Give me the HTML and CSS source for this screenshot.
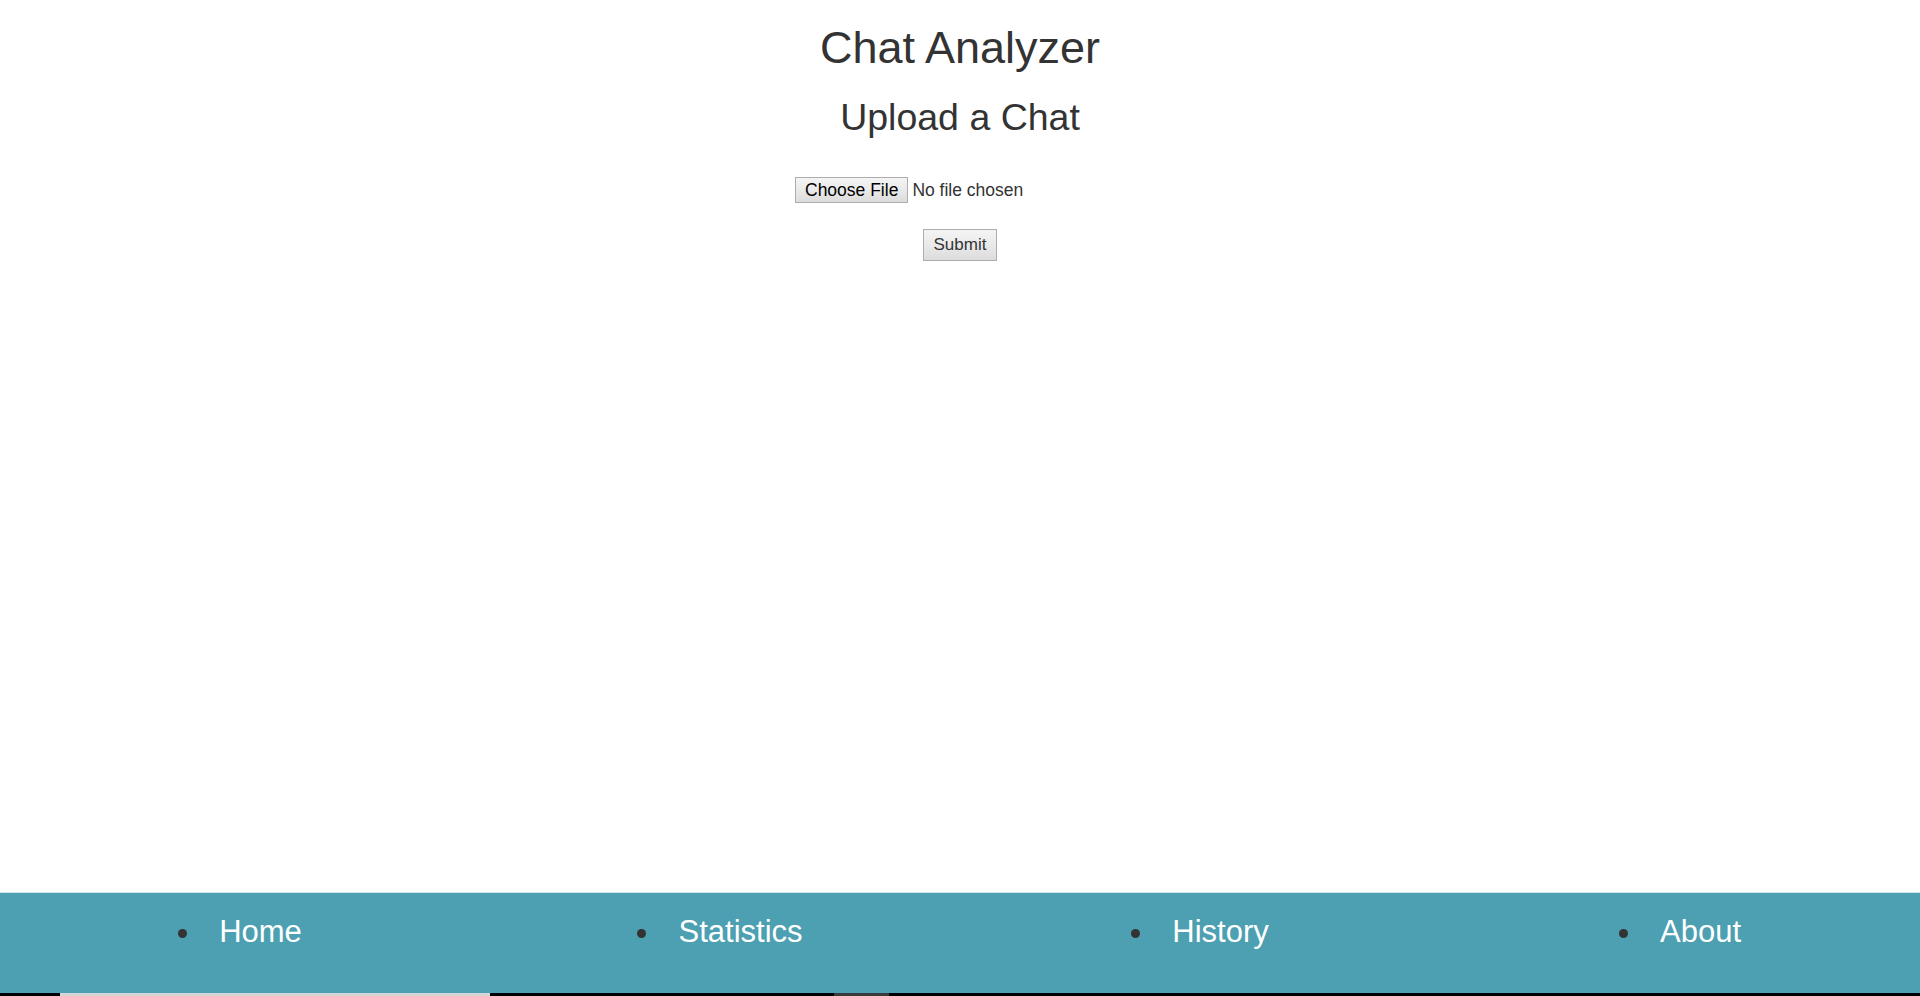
FILE: index.html
```html
<!DOCTYPE html>
<html lang="en">
<head>
<meta charset="utf-8">
<title>Chat Analyzer</title>
<link rel="stylesheet" href="styles.css">
</head>
<body>
  <main class="page">
    <h1 class="title">Chat Analyzer</h1>
    <h2 class="subtitle">Upload a Chat</h2>
    <form class="upload-form">
      <div class="file-field">
        <label class="file-button">Choose File<input type="file" class="file-input"></label>
        <span class="file-name">No file chosen</span>
      </div>
      <button class="submit-button" type="submit">Submit</button>
    </form>
  </main>
  <footer class="site-footer">
    <nav class="nav">
      <ul class="nav-list">
        <li class="nav-item"><a class="nav-link" href="#">Home</a></li>
        <li class="nav-item"><a class="nav-link" href="#">Statistics</a></li>
        <li class="nav-item"><a class="nav-link" href="#">History</a></li>
        <li class="nav-item"><a class="nav-link" href="#">About</a></li>
      </ul>
    </nav>
    <div class="screen-edge"><span class="edge-thumb"></span><span class="edge-mark"></span></div>
  </footer>
</body>
</html>
```
FILE: styles.css
```css
html, body {
  margin: 0;
  padding: 0;
}

body {
  min-height: 100vh;
  display: flex;
  flex-direction: column;
  font-family: "Liberation Sans", Arial, sans-serif;
  color: #333;
  background: #fff;
}

.page {
  flex: 1;
  text-align: center;
}

.title {
  margin: 23px 0 0;
  font-size: 45px;
  line-height: 50px;
  font-weight: normal;
}

.subtitle {
  margin: 23px 0 0;
  font-size: 37.5px;
  line-height: 42px;
  font-weight: normal;
}

.upload-form {
  margin-top: 39px;
  display: flex;
  flex-direction: column;
  align-items: center;
  gap: 26px;
}

.file-field {
  width: 330px;
  display: flex;
  align-items: center;
  gap: 4px;
}

.file-button,
.submit-button {
  box-sizing: border-box;
  font-family: "Liberation Sans", Arial, sans-serif;
  font-size: 17px;
  line-height: 20px;
  border: 1px solid #adadad;
  border-radius: 0;
  background: linear-gradient(#f4f4f4, #ececec 40%, #dcdcdc);
  cursor: default;
}

.file-button {
  display: inline-block;
  padding: 2px 9px;
  font-size: 17.5px;
  color: #000;
}

.file-input {
  display: none;
}

.file-name {
  font-size: 17.5px;
  line-height: 20px;
  color: #333;
}

.submit-button {
  padding: 5px 10px;
  color: #333;
}

.site-footer {
  border-top: 1px solid #cfe4ea;
}

.nav {
  background: #4ca0b2;
}

.nav-list {
  margin: 0;
  padding: 21px 0 44px;
  list-style: none;
  display: grid;
  grid-template-columns: repeat(4, 1fr);
}

.nav-item {
  display: flex;
  justify-content: center;
  align-items: center;
  gap: 32px;
}

.nav-item::before {
  content: "";
  width: 9px;
  height: 9px;
  margin-top: 3px;
  border-radius: 50%;
  background: #333;
}

.nav-link {
  color: #fff;
  text-decoration: none;
  font-size: 31px;
  line-height: 35px;
}

.screen-edge {
  height: 3px;
  display: flex;
  background: #000;
}

.edge-thumb {
  width: 430px;
  margin-left: 60px;
  background: #d6d6d6;
}

.edge-mark {
  width: 55px;
  margin-left: 344px;
  background: #3a3a3a;
}
```
